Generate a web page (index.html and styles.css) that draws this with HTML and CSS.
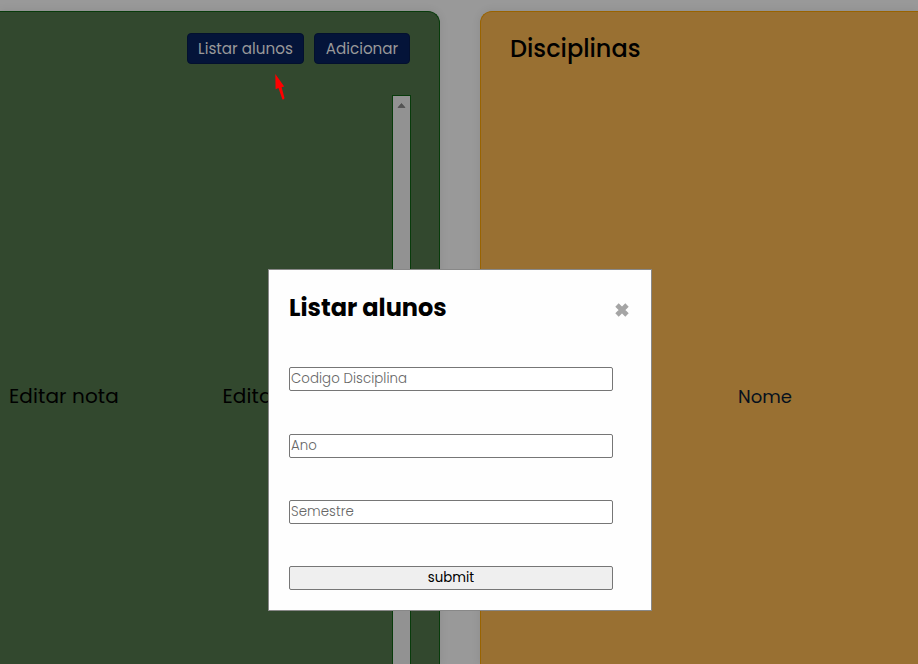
FILE: index.html
```html
<!DOCTYPE html>
<html lang="pt">
<head>
<meta charset="utf-8">
<title>Disciplinas</title>
<link rel="stylesheet" href="styles.css">
</head>
<body>
<main class="board">
  <section class="card students">
    <div class="actions">
      <button class="action list">Listar alunos</button>
      <button class="action add">Adicionar</button>
      <svg class="arrow" width="12" height="28" viewBox="0 0 12 28"><path d="M1.3 0 L10.2 12.6 L7.6 13.2 L10.5 24 Q10 26 8.3 25.2 L4.5 14 L1.6 15.2 Z" fill="#f00"/></svg>
    </div>
    <div class="scroller">
      <div class="row"><span class="first">Editar nota</span><span>Editar nota</span></div>
      <div class="scrollbar"><svg width="9" height="5" viewBox="0 0 9 5"><path d="M4.5 .5 L8 4.5 H1 Z" fill="#555" stroke="#444" stroke-width=".6"/></svg></div>
    </div>
  </section>
  <section class="card subjects">
    <h2>Disciplinas</h2>
    <div class="name">Nome</div>
  </section>
</main>
<div class="overlay">
  <form class="modal">
    <header>
      <h1>Listar alunos</h1>
      <svg class="close" width="16" height="16" viewBox="0 0 16 16"><path d="M3 3 L13 13 M13 3 L3 13" stroke="#a5a5a5" stroke-width="4.8"/></svg>
    </header>
    <input class="code" placeholder="Codigo Disciplina">
    <input class="year" placeholder="Ano">
    <input class="term" placeholder="Semestre">
    <button class="submit" type="button">submit</button>
  </form>
</div>
</body>
</html>
```
FILE: styles.css
```css
* { box-sizing: border-box; }
body {
  margin: 0;
  height: 664px;
  overflow: hidden;
  background: #999;
  color: #000;
  font-family: Poppins, Inter, sans-serif;
  font-feature-settings: "cv11" 1;
}
button, input { font: inherit; font-feature-settings: inherit; }
h1, h2 { margin: 0; }
.board { display: flex; gap: 40px; padding-top: 11px; height: 664px; overflow: hidden; }
.card { flex: none; height: 653px; border-bottom: 0 !important; box-shadow: 0 0 10px rgba(0, 0, 0, .09); }
.students {
  display: flex;
  flex-direction: column;
  width: 440px;
  padding: 21px 29px 0 0;
  background: #32482e;
  border: 1px solid #083b0b;
  border-left: 0;
  border-radius: 0 12px 0 0;
}
.actions { position: relative; display: flex; justify-content: flex-end; gap: 10px; }
.action {
  height: 31px;
  padding: 0;
  border: 1px solid #03102e;
  border-radius: 4px;
  background: #041439;
  color: #999;
  font-size: 15.2px;
}
.list { width: 117px; }
.add { width: 96px; }
.arrow { position: absolute; left: 274px; top: 41px; }
.scroller { display: flex; justify-content: space-between; flex: 1; min-height: 0; margin-top: 31px; }
.row {
  display: flex;
  width: 392px;
  padding: 285px 0 0 9px;
  font-size: 20px;
  line-height: 32px;
  letter-spacing: .1px;
  white-space: nowrap;
  overflow: hidden;
}
.first { width: 213.5px; }
.scrollbar {
  width: 19px;
  margin-right: -1px;
  flex: none;
  padding-top: 7px;
  background: #929292;
  border: 1px solid #083b0b;
  border-bottom: 0;
  text-align: center;
  line-height: 0;
}
.subjects {
  width: 438px;
  padding: 18px 0 0 29px;
  background: #997032;
  border: 1px solid #996300;
  border-right: 0;
  border-radius: 12px 0 0 0;
}
.subjects h2 { font-size: 24px; font-weight: 500; line-height: 38px; }
.name { margin: 314px 0 0 228px; font-size: 18px; line-height: 30px; color: #06101e; }
.overlay { position: fixed; inset: 0; }
.modal {
  display: flex;
  flex-direction: column;
  width: 384px;
  height: 342px;
  margin: 269px 0 0 268px;
  padding: 19px 20px 20px;
  background: #fefefe;
  border: 1px solid #888;
}
.modal header { display: flex; justify-content: space-between; height: 78px; }
.modal h1 { font-size: 24px; font-weight: 700; line-height: 38px; }
.close { margin: 13px 1px 0 0; }
.modal input, .submit {
  width: 324px;
  height: 24px;
  border: 1px solid #767676;
  border-radius: 2px;
  padding: 0 1px;
  font-size: 13.333px;
  font-weight: 300;
}
.modal input { margin-bottom: 42px; letter-spacing: .06px; }
.modal .code { margin-bottom: 43px; }
.modal input::placeholder { color: #666; }
.submit { background: #efefef; color: #000; font-weight: 400; line-height: 20px; }
```
